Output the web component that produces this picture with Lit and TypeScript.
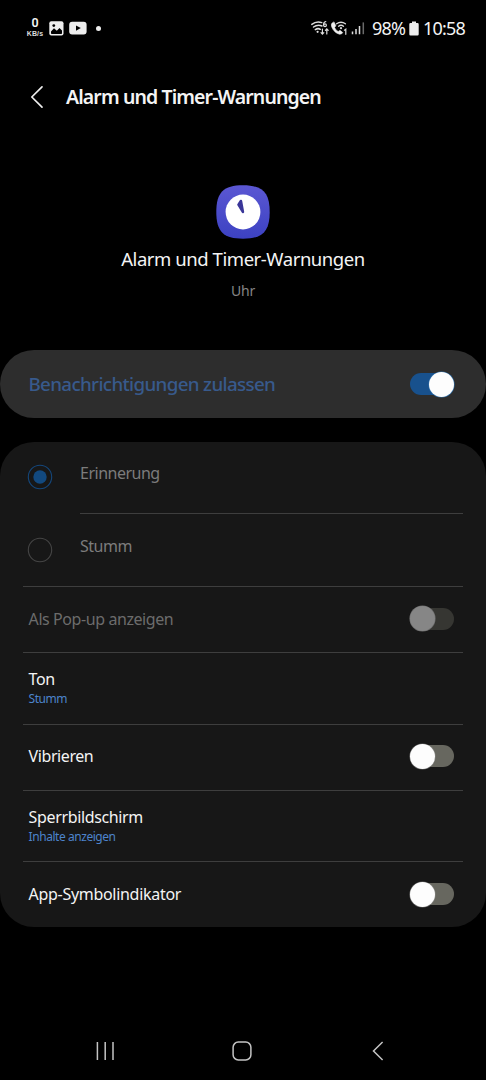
import { LitElement, html, svg, css, nothing } from "lit";
import { customElement, property } from "lit/decorators.js";
import { classMap } from "lit/directives/class-map.js";

@customElement("toggle-switch")
export class ToggleSwitch extends LitElement {
  @property({ type: Boolean }) on = false;
  @property({ type: Boolean }) dim = false;

  static styles = css`
    :host { display: block; flex: none; }
    .track {
      box-sizing: border-box;
      width: 44px;
      height: 22px;
      border-radius: 11px;
      background: #67675f;
      display: flex;
      align-items: center;
    }
    .thumb {
      flex: none;
      width: 25px;
      height: 25px;
      border-radius: 50%;
      background: #fdfdfd;
      box-shadow: 0 0 0 0.6px #99999999;
    }
    .on { background: #18518d; justify-content: flex-end; }
    .on .thumb { box-shadow: 0 0 0 0.6px #2f6ea8; }
    .dim { background: #363632; }
    .dim .thumb { background: #868686; box-shadow: 0 0 0 0.6px #6a6a6a; }
  `;

  render() {
    return html`<div class=${classMap({ track: true, on: this.on, dim: this.dim })}>
      <div class="thumb"></div>
    </div>`;
  }
}

interface Row {
  label: string;
  kind: string;
  sub?: string;
  toggle?: boolean;
  dim?: boolean;
}

const ROWS: Row[] = [
  { label: "Als Pop-up anzeigen", kind: "popup", toggle: true, dim: true },
  { label: "Ton", kind: "sound", sub: "Stumm" },
  { label: "Vibrieren", kind: "vibrate", toggle: true },
  { label: "Sperrbildschirm", kind: "lock", sub: "Inhalte anzeigen" },
  { label: "App-Symbolindikator", kind: "badge", toggle: true },
];

@customElement("app-root")
export class AppRoot extends LitElement {
  static styles = css`
    :host {
      display: flex;
      flex-direction: column;
      width: 486px;
      height: 1080px;
      background: #000;
      color: #f4f4f4;
      font-family: "Noto Sans", "Open Sans", sans-serif;
      overflow: hidden;
      white-space: nowrap;
    }
    svg { display: block; flex: none; }
    .status {
      box-sizing: border-box;
      height: 56px;
      padding: 0 21px 0 26px;
      display: flex;
      align-items: center;
      flex: none;
    }
    .speed {
      width: 18px;
      display: flex;
      flex-direction: column;
      align-items: center;
      margin: -4px 5px 0 0;
    }
    .speed-n { font: 600 12.5px/15px Roboto, sans-serif; }
    .speed-u { font: 700 7px/8px "Liberation Sans", sans-serif; letter-spacing: 0.1px; color: #ddd; }
    .gap-s { margin-right: 5px; }
    .dot { width: 5px; height: 5px; border-radius: 50%; background: #eee; margin-left: 9px; }
    .grow { flex: 1; }
    .battery-text { font-size: 18px; line-height: 24px; letter-spacing: -0.8px; margin: -1px 0 0 5px; width: 37px; }
    .clock { font-size: 18px; line-height: 24px; letter-spacing: -0.8px; margin: -1px 0 0 4px; width: 42px; }
    .header {
      box-sizing: border-box;
      height: 82px;
      padding-left: 30px;
      display: flex;
      align-items: center;
      flex: none;
    }
    .title { margin: 0 0 0 22px; font-size: 19.5px; line-height: 26px; font-weight: 600; letter-spacing: -0.9px; }
    .hero {
      box-sizing: border-box;
      height: 212px;
      padding-top: 47px;
      display: flex;
      flex-direction: column;
      align-items: center;
      flex: none;
    }
    .hero-name { margin-top: 7px; font-size: 18.5px; line-height: 26px; letter-spacing: -0.44px; }
    .hero-app { margin-top: 9px; font-size: 14px; line-height: 20px; letter-spacing: -0.3px; color: #858585; }
    .allow {
      box-sizing: border-box;
      height: 68px;
      border-radius: 34px;
      background: #2d2d2d;
      display: flex;
      align-items: center;
      justify-content: space-between;
      padding: 0 32px 0 28.5px;
      flex: none;
    }
    .allow-label { font-size: 18.8px; font-weight: 500; color: #385a8c; letter-spacing: -0.66px; }
    .card {
      margin-top: 24px;
      border-radius: 34px;
      background: #171717;
      height: 485px;
      padding: 0 23px;
      box-sizing: border-box;
      flex: none;
    }
    .radio { display: flex; height: 72px; }
    .radio svg { margin: 22px 27px 0 4px; }
    .radio-body { flex: 1; box-sizing: border-box; border-bottom: 1.5px solid #3e3e3e; padding-top: 19px; }
    .radio-label { font-size: 16px; line-height: 24px; letter-spacing: -0.5px; color: #7c7c7c; }
    .radio.last { height: 73px; border-bottom: 1.5px solid #3e3e3e; box-sizing: border-box; }
    .radio.last svg { margin-top: 23px; }
    .radio.last .radio-body { border: 0; padding-top: 20px; }
    .row {
      box-sizing: border-box;
      border-bottom: 1.5px solid #3e3e3e;
      display: flex;
      align-items: center;
      justify-content: space-between;
      padding: 0 9px 0 5.6px;
    }
    .popup, .vibrate { height: 66px; padding-bottom: 2px; }
    .sound, .lock { height: 71.5px; }
    .badge { height: 65px; border-bottom: 0; padding-bottom: 1px; }
    .label { font-size: 16px; line-height: 20px; letter-spacing: -0.42px; }
    .lock .label { letter-spacing: -0.36px; }
    .badge .label { letter-spacing: -0.3px; }
    .muted { color: #6c6c6c; }
    .sub { font-size: 12px; line-height: 17px; letter-spacing: -0.45px; color: #4d84cc; margin-top: 1px; }
    .nav {
      margin-top: auto;
      height: 58px;
      display: grid;
      grid-template-columns: repeat(3, 136.5px);
      justify-content: center;
      align-items: center;
      justify-items: center;
      flex: none;
      padding-right: 3px;
    }
  `;

  private radio(label: string, checked: boolean, last: boolean) {
    return html`<div class=${classMap({ radio: true, last })}>
      <svg width="26" height="26" viewBox="0 0 26 26">
        <circle cx="13" cy="13" r="11.7" fill="none" stroke=${checked ? "#14477c" : "#454545"} stroke-width="1.1"></circle>
        ${checked ? svg`<circle cx="13" cy="13" r="6.7" fill="#12497f"></circle>` : nothing}
      </svg>
      <div class="radio-body"><div class="radio-label">${label}</div></div>
    </div>`;
  }

  private row(r: Row) {
    return html`<div class="row ${r.kind}">
      <div>
        <div class=${classMap({ label: true, muted: !!r.dim })}>${r.label}</div>
        ${r.sub ? html`<div class="sub">${r.sub}</div>` : nothing}
      </div>
      ${r.toggle ? html`<toggle-switch ?dim=${!!r.dim}></toggle-switch>` : nothing}
    </div>`;
  }

  render() {
    return html`
      <div class="status">
        <div class="speed"><span class="speed-n">0</span><span class="speed-u">KB/s</span></div>
        <svg class="gap-s" width="15" height="15" viewBox="0 0 15 15">
          <rect x="0.3" y="0.3" width="14.2" height="14.2" rx="2" fill="#eee"></rect>
          <path d="M2 10.4 5 7.3 7.8 9.8 10.5 7 13 9.4V12.3Q13 13 12.3 13H2.7Q2 13 2 12.3Z" fill="#000"></path>
          <circle cx="4.8" cy="4.6" r="1.4" fill="#000"></circle>
        </svg>
        <svg width="18" height="14" viewBox="0 0 18 14">
          <rect x="0.2" y="0.8" width="17.4" height="12.6" rx="3" fill="#eee"></rect>
          <path d="M7 4.4 11.8 7.1 7 9.8Z" fill="#000"></path>
        </svg>
        <div class="dot"></div>
        <div class="grow"></div>
        <svg width="57" height="18" viewBox="0 0 57 18" fill="none" stroke="#ddd" stroke-width="1.5" stroke-linecap="round">
          <path d="M1.8 5.4Q6.5 1.6 11.8 3.6M3.5 8Q7.6 5 12 7M5.3 10.6Q8 8.8 10.3 10.3"></path>
          <circle cx="7.6" cy="12.8" r="1.1" fill="#ddd" stroke="none"></circle>
          <path d="M15.8 2.5Q13.4 3 13.6 6" stroke-width="1.2"></path>
          <circle cx="15" cy="6.2" r="1.4" stroke-width="1.2"></circle>
          <path d="M12.4 10V15M11 13.6 12.4 15.1 13.8 13.6M16.8 15V10M15.4 11.4 16.8 9.9 18.2 11.4" stroke-width="1.2"></path>
          <path d="M22.7 3.4Q20.6 4.5 21.6 7.8 24 13.8 29.5 15.3 32 15.5 32.8 13.6L30 11.3 28.2 12.5Q25.5 11 24.6 8.5L25.9 6.8 24.2 3.2Z" fill="#eee" stroke="#eee" stroke-width="0.5"></path>
          <path d="M26.6 4.8Q31 1.7 35.4 4.8M28.6 7.2Q31 5.4 33.5 7.2" stroke-width="1.4"></path>
          <circle cx="31" cy="9.2" r="1.1" fill="#ddd" stroke="none"></circle>
          <path d="M34.4 11.2 35.8 10.2V15.3" stroke-width="1.2"></path>
          <path d="M42.5 12.4V15.2M46 10V15.2M49.5 7V15.2" stroke-width="1.5" stroke-linecap="butt"></path>
          <path d="M53.3 3.4V15.2" stroke="#6a6a6a" stroke-width="1.5" stroke-linecap="butt"></path>
        </svg>
        <span class="battery-text">98%</span>
        <svg width="10" height="15" viewBox="0 0 10 15"><path d="M3 0.5H7V2H8.5Q9.7 2 9.7 3.2V13.3Q9.7 14.5 8.5 14.5H1.5Q0.3 14.5 0.3 13.3V3.2Q0.3 2 1.5 2H3Z" fill="#eee"></path></svg>
        <span class="clock">10:58</span>
      </div>
      <div class="header">
        <svg width="14" height="24" viewBox="0 0 14 24"><path d="M12 1.8 1.8 12 12 22.2" fill="none" stroke="#eee" stroke-width="1.7" stroke-linecap="round" stroke-linejoin="round"></path></svg>
        <h1 class="title">Alarm und Timer-Warnungen</h1>
      </div>
      <div class="hero">
        <svg width="54" height="54" viewBox="0 0 54 54">
          <defs><linearGradient id="g" x1="0" y1="0" x2="0" y2="1"><stop offset="0" stop-color="#5b57d3"></stop><stop offset="1" stop-color="#3c42c2"></stop></linearGradient></defs>
          <path d="M27 0.3C46.5 0.3 53.7 7.5 53.7 27S46.5 53.7 27 53.7 0.3 46.5 0.3 27 7.5 0.3 27 0.3Z" fill="url(#g)"></path>
          <circle cx="27" cy="27" r="17.4" fill="#fff"></circle>
          <path d="M22.5 19.6 26.9 26.9 24.9 16Z" fill="#3a3699" stroke="#3a3699" stroke-width="2.6" stroke-linejoin="round"></path>
        </svg>
        <div class="hero-name">Alarm und Timer-Warnungen</div>
        <div class="hero-app">Uhr</div>
      </div>
      <div class="allow">
        <span class="allow-label">Benachrichtigungen zulassen</span>
        <toggle-switch on></toggle-switch>
      </div>
      <div class="card">
        ${this.radio("Erinnerung", true, false)}
        ${this.radio("Stumm", false, true)}
        ${ROWS.map((r) => this.row(r))}
      </div>
      <div class="nav">
        <svg width="20" height="20" viewBox="0 0 20 20"><path d="M2.4 1V19M10.2 1V19M18 1V19" stroke="#c4c4c4" stroke-width="1.5"></path></svg>
        <svg width="20" height="20" viewBox="0 0 20 20"><rect x="1.1" y="1.1" width="17.8" height="17.8" rx="5.2" fill="none" stroke="#c4c4c4" stroke-width="1.5"></rect></svg>
        <svg width="12" height="20" viewBox="0 0 12 20"><path d="M10.6 1 1.5 10 10.6 19" fill="none" stroke="#c4c4c4" stroke-width="1.5"></path></svg>
      </div>
    `;
  }
}
